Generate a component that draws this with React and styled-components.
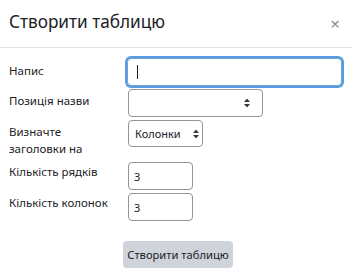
import React from "react";
import styled, { createGlobalStyle } from "styled-components";

const Global = createGlobalStyle`
  html, body { margin: 0; padding: 0; background: #fff; }
  body { font-family: "Noto Sans", "Open Sans", sans-serif; color: #1d2125; }
  * { box-sizing: border-box; }
`;

const Dialog = styled.div`
  width: 352px;
  height: 277px;
  background: #fff;
  display: flex;
  flex-direction: column;
`;

const Header = styled.div`
  height: 48px;
  display: flex;
  align-items: center;
  justify-content: space-between;
  padding: 0 12px 2px 9px;
  border-bottom: 1px solid #dee2e6;
`;

const Title = styled.h5`
  margin: 0;
  font-size: 17.2px;
  font-weight: 400;
  line-height: 1.2;
  color: #1d2125;
`;

const Close = styled.span`
  font-size: 17px;
  line-height: 1;
  color: #8a8d90;
  margin-top: 1px;
`;

const Body = styled.div`
  padding: 10px 9px 0 9px;
  display: flex;
  flex-direction: column;
  gap: 3px;
`;

const Row = styled.div`
  display: grid;
  grid-template-columns: 119px 1fr;
  align-items: start;
  margin-top: ${(p) => p.$mt || 0}px;
`;

const Label = styled.label`
  font-size: 11.5px;
  line-height: 17px;
  padding-top: ${(p) => p.$pt ?? 4}px;
  color: #1d2125;
`;

const TextInput = styled.input`
  width: ${(p) => p.$w}px;
  height: 28px;
  border: 1px solid ${(p) => (p.$focus ? "#6aa6de" : "#8f959e")};
  border-radius: 4px;
  box-shadow: ${(p) => (p.$focus ? "0 0 0 2px #5b9be0" : "none")};
  padding: 0 5px;
  font-family: inherit;
  font-size: 11px;
  color: #1d2125;
  background: #fff;
  outline: none;
`;

const Caret = styled.span`
  position: absolute;
  left: 10px;
  top: 7px;
  width: 1px;
  height: 14px;
  background: #1d2125;
`;

const FocusWrap = styled.div`
  position: relative;
  width: 215px;
  margin-left: -1px;
`;

const SelectWrap = styled.div`
  position: relative;
  width: ${(p) => p.$w}px;
`;

const Select = styled.select`
  appearance: none;
  -webkit-appearance: none;
  width: 100%;
  height: ${(p) => p.$h || 28}px;
  border: 1px solid #8f959e;
  border-radius: 4px;
  background: #fff;
  padding: 0 20px 0 6px;
  font-family: inherit;
  font-size: 11px;
  color: #1d2125;
  outline: none;
`;

const Arrow = styled.svg`
  position: absolute;
  right: ${(p) => p.$r}px;
  top: 50%;
  transform: translateY(-50%);
  pointer-events: none;
`;

const Footer = styled.div`
  display: flex;
  justify-content: center;
  padding: 20px 0 0 4px;
`;

const Button = styled.button`
  width: 110px;
  height: 27px;
  border: none;
  border-radius: 4px;
  background: #ced4da;
  color: #1d2125;
  font-family: inherit;
  font-size: 11.2px;
  padding: 0;
`;

const Updown = ({ r }) => (
  <Arrow $r={r} width="6" height="9" viewBox="0 0 6 9">
    <path d="M3 0 L6 3.5 H0 Z M3 9 L6 5.5 H0 Z" fill="#343a40" />
  </Arrow>
);

export default function App() {
  return (
    <>
      <Global />
      <Dialog>
        <Header>
          <Title>Створити таблицю</Title>
          <Close>×</Close>
        </Header>
        <Body>
          <Row>
            <Label $pt={4}>Напис</Label>
            <FocusWrap>
              <TextInput $focus $w={215} defaultValue="" />
              <Caret />
            </FocusWrap>
          </Row>
          <Row>
            <Label $pt={3}>Позиція назви</Label>
            <SelectWrap $w={135}>
              <Select defaultValue="">
                <option value=""></option>
              </Select>
              <Updown r={13} />
            </SelectWrap>
          </Row>
          <Row>
            <Label $pt={3}>
              Визначте
              <br />
              заголовки на
            </Label>
            <SelectWrap $w={75}>
              <Select $h={27} defaultValue="c">
                <option value="c">Колонки</option>
              </Select>
              <Updown r={4} />
            </SelectWrap>
          </Row>
          <Row $mt={2}>
            <Label $pt={1}>Кількість рядків</Label>
            <TextInput $w={65} defaultValue="3" />
          </Row>
          <Row>
            <Label $pt={1}>Кількість колонок</Label>
            <TextInput $w={65} defaultValue="3" />
          </Row>
        </Body>
        <Footer>
          <Button>Створити таблицю</Button>
        </Footer>
      </Dialog>
    </>
  );
}
